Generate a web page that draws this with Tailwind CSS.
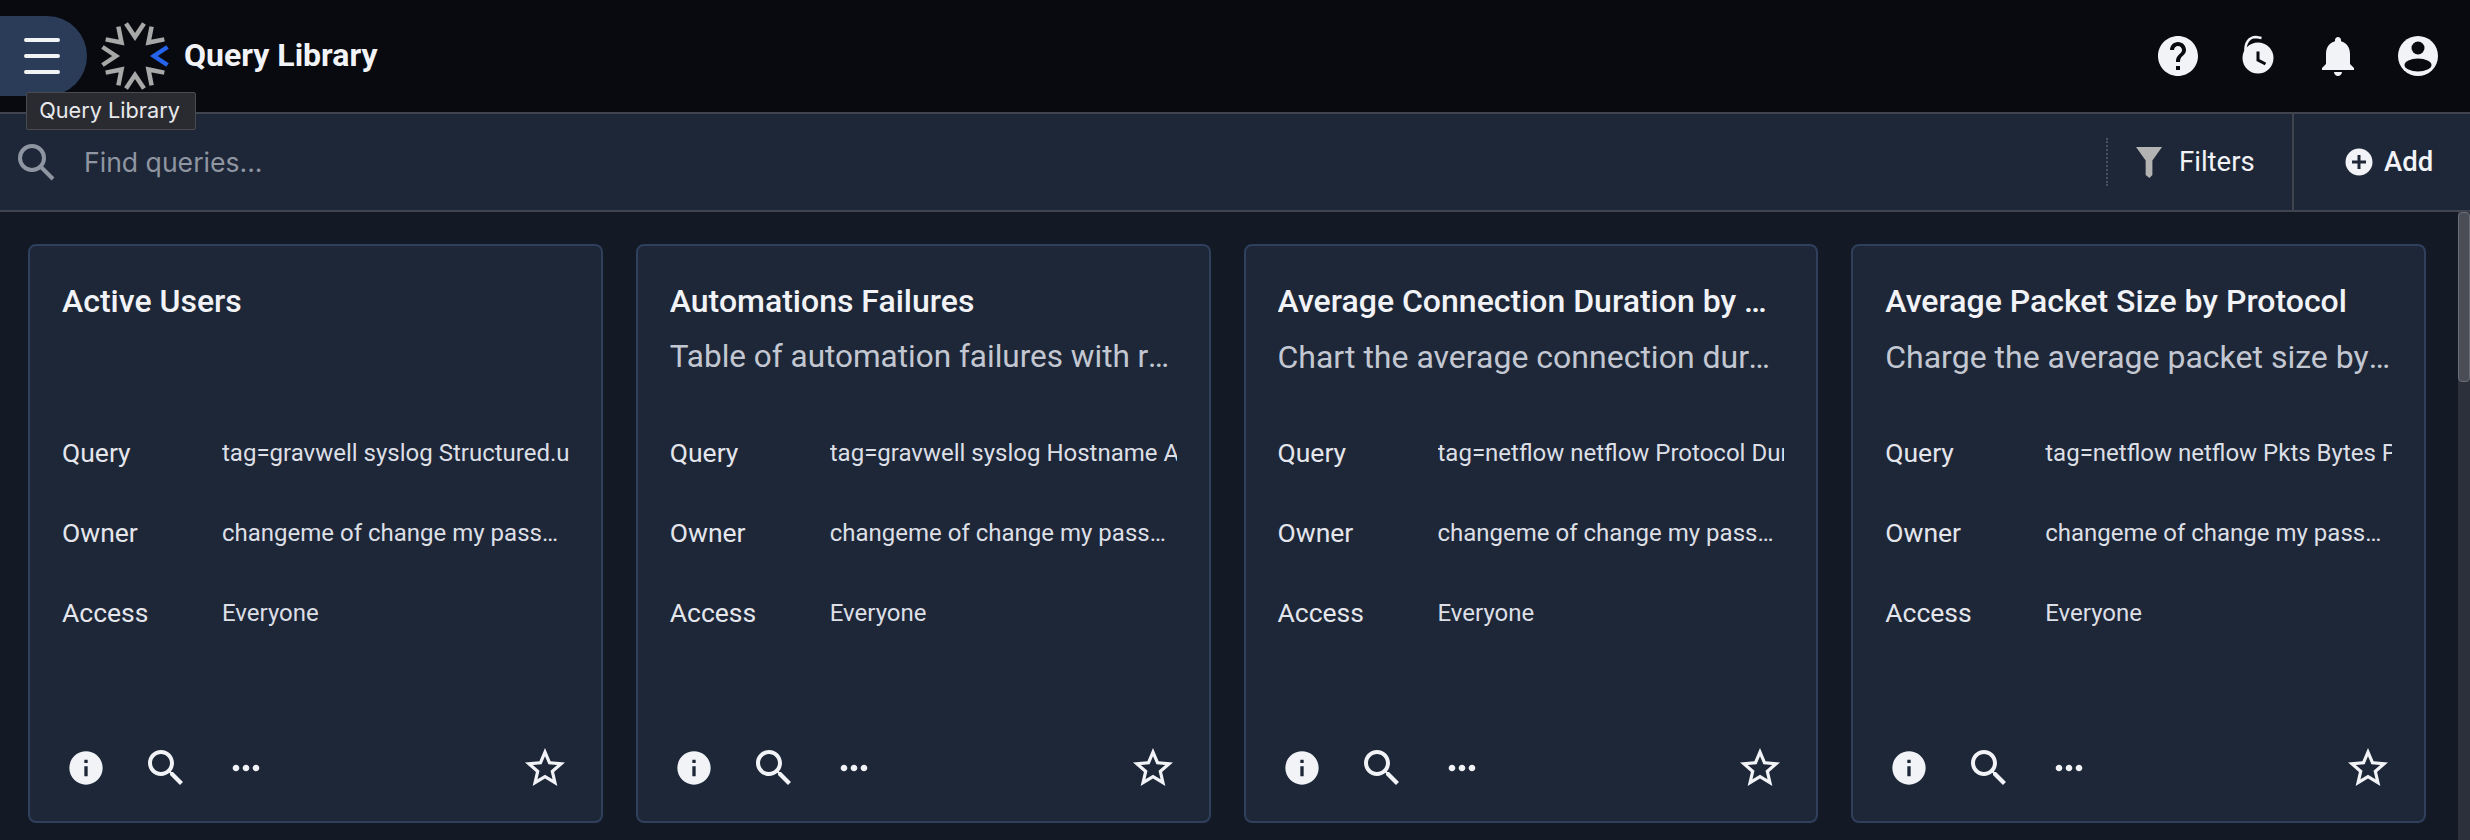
<!DOCTYPE html>
<html lang="en">
<head>
    <meta charset="UTF-8">
    <title>Query Library</title>
    <script src="https://cdn.jsdelivr.net/npm/@tailwindcss/browser@4"></script>
</head>
<body class="h-[840px] overflow-hidden bg-[#131925] font-['Roboto',sans-serif] text-[#f1f3f7]">

    <!-- top bar -->
    <header class="relative flex h-[114px] items-center border-b-2 border-[#3f444e] bg-[#080a10]">
        <button class="flex h-[80px] w-[87px] items-center rounded-r-[40px] bg-[#2b3c58] pl-[24px]">
            <svg width="36" height="36" viewBox="0 0 36 36" fill="#f1f3f7">
                <rect y="0" width="36" height="4" rx="2"/><rect y="16" width="36" height="4" rx="2"/><rect y="32" width="36" height="4" rx="2"/>
            </svg>
        </button>
        <svg class="ml-[14px]" width="68" height="68" viewBox="-34 -34 68 68" fill="none" stroke="#a8a8a8" stroke-width="4.500">
            <path d="M-9 -32.500 L0 -19 L9 -32.500"/>
            <path d="M-9 -32.500 L0 -19 L9 -32.500" transform="rotate(45)"/>
            <path d="M-9 -32.500 L0 -19 L9 -32.500" transform="rotate(90)" stroke="#2563eb"/>
            <path d="M-9 -32.500 L0 -19 L9 -32.500" transform="rotate(135)"/>
            <path d="M-9 -32.500 L0 -19 L9 -32.500" transform="rotate(180)"/>
            <path d="M-9 -32.500 L0 -19 L9 -32.500" transform="rotate(225)"/>
            <path d="M-9 -32.500 L0 -19 L9 -32.500" transform="rotate(270)"/>
            <path d="M-9 -32.500 L0 -19 L9 -32.500" transform="rotate(315)"/>
        </svg>
        <h1 class="mb-[2px] ml-[15px] text-[32px] font-bold">Query Library</h1>
        <div class="ml-auto mr-[28px] flex items-center gap-[32px]">
            <svg width="48" height="48" viewBox="0 0 24 24" fill="currentColor"><path d="M12 2C6.480 2 2 6.480 2 12s4.480 10 10 10 10-4.480 10-10S17.520 2 12 2zm1 17h-2v-2h2v2zm2.070-7.750l-.9.92C13.450 12.900 13 13.500 13 15h-2v-.5c0-1.100.45-2.100 1.170-2.830l1.240-1.260c.37-.36.59-.86.59-1.410 0-1.100-.9-2-2-2s-2 .9-2 2H8c0-2.210 1.790-4 4-4s4 1.790 4 4c0 .88-.36 1.680-.93 2.250z"/></svg>
            <svg width="48" height="48" viewBox="0 0 48 48" fill="none"><path d="M11.500 19 C11 11 15 5 22 5 L27.500 6" stroke="#f1f3f7" stroke-width="2.500"/><circle cx="24" cy="26" r="15.500" fill="#f1f3f7"/><path d="M24 19.500 V28 L31.500 32" stroke="#080a10" stroke-width="3"/></svg>
            <svg width="48" height="48" viewBox="0 0 24 24" fill="currentColor"><path d="M12 22c1.100 0 2-.9 2-2h-4c0 1.100.89 2 2 2zm6-6v-5c0-3.070-1.640-5.640-4.500-6.320V4c0-.83-.67-1.500-1.500-1.500s-1.500.67-1.500 1.500v.68C7.630 5.360 6 7.920 6 11v5l-2 2v1h16v-1l-2-2z"/></svg>
            <svg width="48" height="48" viewBox="0 0 48 48"><circle cx="24" cy="24" r="20" fill="#f1f3f7"/><circle cx="24" cy="16" r="6.500" fill="#080a10"/><ellipse cx="24" cy="33" rx="13.500" ry="6.500" fill="#080a10"/></svg>
        </div>
        <div class="absolute left-[26px] top-[92px] z-10 flex h-[38px] w-[170px] items-center justify-center rounded-[2px] border border-[#4a4b50] bg-[#2a2b30] pb-[1px] pr-[3px] font-['Inter',sans-serif] text-[21.700px] text-[#e8e9ec]">Query Library</div>
    </header>

    <!-- search toolbar -->
    <div class="flex h-[98px] items-center border-b-2 border-[#3f444e] bg-[#1e2738]">
        <svg class="ml-[16px]" width="40" height="40" viewBox="0 0 40 40" fill="none" stroke="#8f95a1" stroke-width="4"><circle cx="16" cy="16" r="12"/><path d="M25 25 L37 37"/></svg>
        <input class="ml-[28px] flex-1 bg-transparent pt-[2px] font-['Inter',sans-serif] text-[26.600px] text-[#f1f3f7] placeholder:text-[#8f95a1]" placeholder="Find queries...">
        <div class="h-[48px] border-l-2 border-dotted border-[#4b515c]"></div>
        <div class="flex h-full w-[184px] items-center pl-[28px]">
            <svg width="27" height="31" viewBox="0 0 28 32" fill="#b3b3b3"><path d="M0 0 H27 L17 14 V29 L14 32 L10 29 V14 Z"/></svg>
            <span class="ml-[16px] text-[27.500px]">Filters</span>
        </div>
        <div class="flex h-full w-[178px] items-center border-l-2 border-[#3f444e] pl-[51px]">
            <svg width="28" height="28" viewBox="0 0 28 28"><circle cx="14" cy="14" r="13.500" fill="#f1f3f7"/><path d="M14 7 V21 M7 14 H21" stroke="#1e2738" stroke-width="3"/></svg>
            <span class="ml-[11px] text-[27.500px] font-medium">Add</span>
        </div>
    </div>

    <!-- cards -->
    <main class="relative h-[628px] pl-[28px] pt-[32px]">
        <div class="grid w-[2398px] grid-cols-4 gap-x-[33px]">

            <article class="flex h-[579px] flex-col rounded-[8px] border-2 border-[#2f3f5c] bg-[#1e2738] px-[32px] pb-[29px] pt-[35px]">
                <h2 class="truncate text-[32px] leading-[40px] font-medium">Active Users</h2>
                <p class="mt-[16px] h-[40px] truncate text-[32px] leading-[40px] text-[#c3c7d1]"></p>
                <dl class="mt-[56px] flex flex-col gap-[40px] text-[26.500px] leading-[40px] text-[#e4e6ec]">
                    <div class="flex"><dt class="w-[160px] shrink-0">Query</dt><dd class="overflow-hidden whitespace-nowrap text-[24px] text-[#dcdfe5]">tag=gravwell syslog Structured.user</dd></div>
                    <div class="flex"><dt class="w-[160px] shrink-0">Owner</dt><dd class="truncate text-[24px] text-[#dcdfe5]">changeme of change my password</dd></div>
                    <div class="flex"><dt class="w-[160px] shrink-0">Access</dt><dd class="truncate text-[24px] text-[#dcdfe5]">Everyone</dd></div>
                </dl>
                <div class="mt-auto flex h-[48px] items-center gap-[32px]">
                    <span class="flex size-[48px] items-center justify-center"><svg width="40" height="40" viewBox="0 0 24 24" fill="currentColor"><path d="M12 2C6.480 2 2 6.480 2 12s4.480 10 10 10 10-4.480 10-10S17.520 2 12 2zm1 15h-2v-6h2v6zm0-8h-2V7h2v2z"/></svg></span>
                    <span class="flex size-[48px] items-center justify-center"><svg width="48" height="48" viewBox="0 0 24 24" fill="currentColor"><path d="M15.500 14h-.79l-.28-.27C15.410 12.590 16 11.110 16 9.500 16 5.910 13.090 3 9.500 3S3 5.910 3 9.500 5.910 16 9.500 16c1.610 0 3.090-.59 4.230-1.570l.27.28v.79l5 4.990L20.490 19l-4.990-5zm-6 0C7.010 14 5 11.990 5 9.500S7.010 5 9.500 5 14 7.010 14 9.500 11.990 14 9.500 14z"/></svg></span>
                    <span class="flex size-[48px] items-center justify-center"><svg width="40" height="40" viewBox="0 0 24 24" fill="currentColor"><path d="M6 10c-1.100 0-2 .9-2 2s.9 2 2 2 2-.9 2-2-.9-2-2-2zm12 0c-1.100 0-2 .9-2 2s.9 2 2 2 2-.9 2-2-.9-2-2-2zm-6 0c-1.100 0-2 .9-2 2s.9 2 2 2 2-.9 2-2-.9-2-2-2z"/></svg></span>
                    <svg class="ml-auto" width="48" height="48" viewBox="0 0 24 24" fill="currentColor"><path d="M22 9.240l-7.190-.62L12 2 9.190 8.630 2 9.240l5.460 4.730L5.820 21 12 17.270 18.180 21l-1.630-7.030L22 9.240zM12 15.400l-3.760 2.270 1-4.280-3.320-2.880 4.380-.38L12 6.100l1.710 4.040 4.380.38-3.320 2.880 1 4.280L12 15.400z"/></svg>
                </div>
            </article>

            <article class="flex h-[579px] flex-col rounded-[8px] border-2 border-[#2f3f5c] bg-[#1e2738] px-[32px] pb-[29px] pt-[35px]">
                <h2 class="truncate text-[32px] leading-[40px] font-medium">Automations Failures</h2>
                <p class="mt-[16px] h-[40px] truncate text-[31.500px] leading-[40px] text-[#c3c7d1]">Table of automation failures with results and errors</p>
                <dl class="mt-[56px] flex flex-col gap-[40px] text-[26.500px] leading-[40px] text-[#e4e6ec]">
                    <div class="flex"><dt class="w-[160px] shrink-0">Query</dt><dd class="overflow-hidden whitespace-nowrap text-[24px] text-[#dcdfe5]">tag=gravwell syslog Hostname Appname</dd></div>
                    <div class="flex"><dt class="w-[160px] shrink-0">Owner</dt><dd class="truncate text-[24px] text-[#dcdfe5]">changeme of change my password</dd></div>
                    <div class="flex"><dt class="w-[160px] shrink-0">Access</dt><dd class="truncate text-[24px] text-[#dcdfe5]">Everyone</dd></div>
                </dl>
                <div class="mt-auto flex h-[48px] items-center gap-[32px]">
                    <span class="flex size-[48px] items-center justify-center"><svg width="40" height="40" viewBox="0 0 24 24" fill="currentColor"><path d="M12 2C6.480 2 2 6.480 2 12s4.480 10 10 10 10-4.480 10-10S17.520 2 12 2zm1 15h-2v-6h2v6zm0-8h-2V7h2v2z"/></svg></span>
                    <span class="flex size-[48px] items-center justify-center"><svg width="48" height="48" viewBox="0 0 24 24" fill="currentColor"><path d="M15.500 14h-.79l-.28-.27C15.410 12.590 16 11.110 16 9.500 16 5.910 13.090 3 9.500 3S3 5.910 3 9.500 5.910 16 9.500 16c1.610 0 3.090-.59 4.230-1.570l.27.28v.79l5 4.990L20.490 19l-4.990-5zm-6 0C7.010 14 5 11.990 5 9.500S7.010 5 9.500 5 14 7.010 14 9.500 11.990 14 9.500 14z"/></svg></span>
                    <span class="flex size-[48px] items-center justify-center"><svg width="40" height="40" viewBox="0 0 24 24" fill="currentColor"><path d="M6 10c-1.100 0-2 .9-2 2s.9 2 2 2 2-.9 2-2-.9-2-2-2zm12 0c-1.100 0-2 .9-2 2s.9 2 2 2 2-.9 2-2-.9-2-2-2zm-6 0c-1.100 0-2 .9-2 2s.9 2 2 2 2-.9 2-2-.9-2-2-2z"/></svg></span>
                    <svg class="ml-auto" width="48" height="48" viewBox="0 0 24 24" fill="currentColor"><path d="M22 9.240l-7.190-.62L12 2 9.190 8.630 2 9.240l5.460 4.730L5.820 21 12 17.270 18.180 21l-1.630-7.030L22 9.240zM12 15.400l-3.760 2.270 1-4.280-3.320-2.880 4.380-.38L12 6.100l1.710 4.040 4.380.38-3.320 2.880 1 4.280L12 15.400z"/></svg>
                </div>
            </article>

            <article class="flex h-[579px] flex-col rounded-[8px] border-2 border-[#2f3f5c] bg-[#1e2738] px-[32px] pb-[29px] pt-[35px]">
                <h2 class="truncate text-[32px] leading-[40px] font-medium">Average Connection Duration by Protocol</h2>
                <p class="mt-[16px] h-[40px] truncate text-[32px] leading-[40px] text-[#c3c7d1]">Chart the average connection duration by protocol</p>
                <dl class="mt-[56px] flex flex-col gap-[40px] text-[26.500px] leading-[40px] text-[#e4e6ec]">
                    <div class="flex"><dt class="w-[160px] shrink-0">Query</dt><dd class="overflow-hidden whitespace-nowrap text-[24px] text-[#dcdfe5]">tag=netflow netflow Protocol Duration</dd></div>
                    <div class="flex"><dt class="w-[160px] shrink-0">Owner</dt><dd class="truncate text-[24px] text-[#dcdfe5]">changeme of change my password</dd></div>
                    <div class="flex"><dt class="w-[160px] shrink-0">Access</dt><dd class="truncate text-[24px] text-[#dcdfe5]">Everyone</dd></div>
                </dl>
                <div class="mt-auto flex h-[48px] items-center gap-[32px]">
                    <span class="flex size-[48px] items-center justify-center"><svg width="40" height="40" viewBox="0 0 24 24" fill="currentColor"><path d="M12 2C6.480 2 2 6.480 2 12s4.480 10 10 10 10-4.480 10-10S17.520 2 12 2zm1 15h-2v-6h2v6zm0-8h-2V7h2v2z"/></svg></span>
                    <span class="flex size-[48px] items-center justify-center"><svg width="48" height="48" viewBox="0 0 24 24" fill="currentColor"><path d="M15.500 14h-.79l-.28-.27C15.410 12.590 16 11.110 16 9.500 16 5.910 13.090 3 9.500 3S3 5.910 3 9.500 5.910 16 9.500 16c1.610 0 3.090-.59 4.230-1.570l.27.28v.79l5 4.990L20.490 19l-4.990-5zm-6 0C7.010 14 5 11.990 5 9.500S7.010 5 9.500 5 14 7.010 14 9.500 11.990 14 9.500 14z"/></svg></span>
                    <span class="flex size-[48px] items-center justify-center"><svg width="40" height="40" viewBox="0 0 24 24" fill="currentColor"><path d="M6 10c-1.100 0-2 .9-2 2s.9 2 2 2 2-.9 2-2-.9-2-2-2zm12 0c-1.100 0-2 .9-2 2s.9 2 2 2 2-.9 2-2-.9-2-2-2zm-6 0c-1.100 0-2 .9-2 2s.9 2 2 2 2-.9 2-2-.9-2-2-2z"/></svg></span>
                    <svg class="ml-auto" width="48" height="48" viewBox="0 0 24 24" fill="currentColor"><path d="M22 9.240l-7.190-.62L12 2 9.190 8.630 2 9.240l5.460 4.730L5.820 21 12 17.270 18.180 21l-1.630-7.030L22 9.240zM12 15.400l-3.760 2.270 1-4.280-3.320-2.880 4.380-.38L12 6.100l1.710 4.040 4.380.38-3.320 2.880 1 4.280L12 15.400z"/></svg>
                </div>
            </article>

            <article class="flex h-[579px] flex-col rounded-[8px] border-2 border-[#2f3f5c] bg-[#1e2738] px-[32px] pb-[29px] pt-[35px]">
                <h2 class="truncate text-[32px] leading-[40px] font-medium">Average Packet Size by Protocol</h2>
                <p class="mt-[16px] h-[40px] truncate text-[32px] leading-[40px] text-[#c3c7d1]">Charge the average packet size by protocol</p>
                <dl class="mt-[56px] flex flex-col gap-[40px] text-[26.500px] leading-[40px] text-[#e4e6ec]">
                    <div class="flex"><dt class="w-[160px] shrink-0">Query</dt><dd class="overflow-hidden whitespace-nowrap text-[24px] text-[#dcdfe5]">tag=netflow netflow Pkts Bytes Protocol</dd></div>
                    <div class="flex"><dt class="w-[160px] shrink-0">Owner</dt><dd class="truncate text-[24px] text-[#dcdfe5]">changeme of change my password</dd></div>
                    <div class="flex"><dt class="w-[160px] shrink-0">Access</dt><dd class="truncate text-[24px] text-[#dcdfe5]">Everyone</dd></div>
                </dl>
                <div class="mt-auto flex h-[48px] items-center gap-[32px]">
                    <span class="flex size-[48px] items-center justify-center"><svg width="40" height="40" viewBox="0 0 24 24" fill="currentColor"><path d="M12 2C6.480 2 2 6.480 2 12s4.480 10 10 10 10-4.480 10-10S17.520 2 12 2zm1 15h-2v-6h2v6zm0-8h-2V7h2v2z"/></svg></span>
                    <span class="flex size-[48px] items-center justify-center"><svg width="48" height="48" viewBox="0 0 24 24" fill="currentColor"><path d="M15.500 14h-.79l-.28-.27C15.410 12.590 16 11.110 16 9.500 16 5.910 13.090 3 9.500 3S3 5.910 3 9.500 5.910 16 9.500 16c1.610 0 3.090-.59 4.230-1.570l.27.28v.79l5 4.990L20.490 19l-4.990-5zm-6 0C7.010 14 5 11.990 5 9.500S7.010 5 9.500 5 14 7.010 14 9.500 11.990 14 9.500 14z"/></svg></span>
                    <span class="flex size-[48px] items-center justify-center"><svg width="40" height="40" viewBox="0 0 24 24" fill="currentColor"><path d="M6 10c-1.100 0-2 .9-2 2s.9 2 2 2 2-.9 2-2-.9-2-2-2zm12 0c-1.100 0-2 .9-2 2s.9 2 2 2 2-.9 2-2-.9-2-2-2zm-6 0c-1.100 0-2 .9-2 2s.9 2 2 2 2-.9 2-2-.9-2-2-2z"/></svg></span>
                    <svg class="ml-auto" width="48" height="48" viewBox="0 0 24 24" fill="currentColor"><path d="M22 9.240l-7.190-.62L12 2 9.190 8.630 2 9.240l5.460 4.730L5.820 21 12 17.270 18.180 21l-1.630-7.030L22 9.240zM12 15.400l-3.760 2.270 1-4.280-3.320-2.880 4.380-.38L12 6.100l1.710 4.040 4.380.38-3.320 2.880 1 4.280L12 15.400z"/></svg>
                </div>
            </article>
        </div>

        <!-- scrollbar -->
        <div class="absolute right-0 top-0 h-full w-[12px] bg-[#2c303a]">
            <div class="h-[170px] rounded-[4px] border border-[#6b6e76] bg-[#4a4d55]"></div>
        </div>
    </main>
</body>
</html>
